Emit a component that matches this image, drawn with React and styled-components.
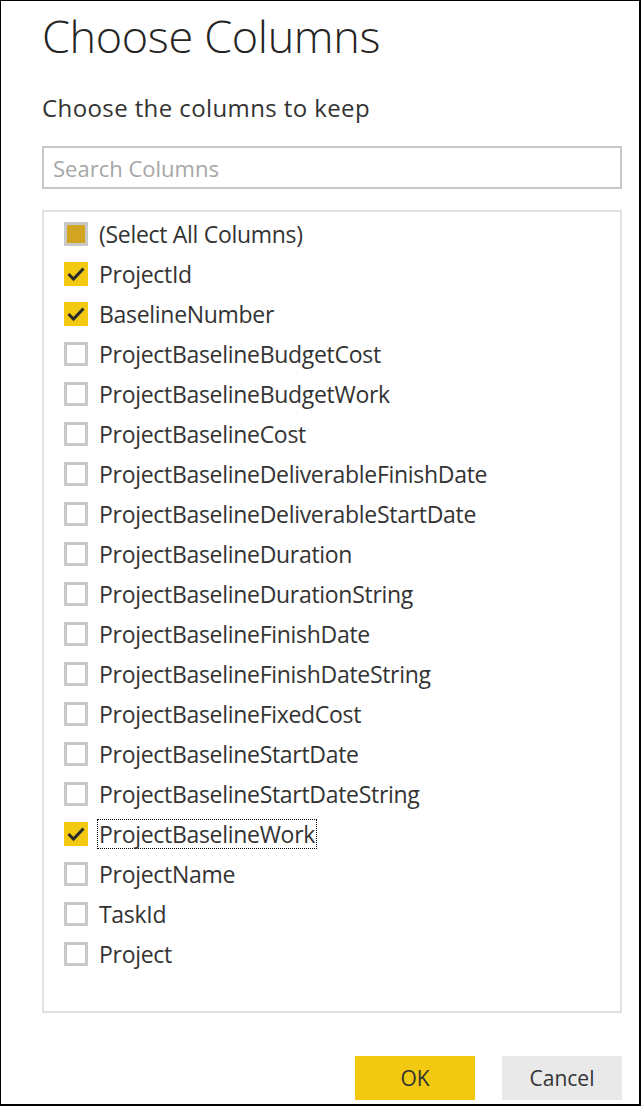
import React, { useState } from 'react'
import styled, { createGlobalStyle } from 'styled-components'

const GlobalStyle = createGlobalStyle`
  html, body {
    margin: 0;
    padding: 0;
    background: #ffffff;
  }
  * {
    box-sizing: border-box;
  }
`

const Dialog = styled.div`
  width: 641px;
  height: 1106px;
  border: 1px solid #000;
  border-right-width: 2px;
  border-bottom-width: 2px;
  padding: 5px 17px 4px 41px;
  display: flex;
  flex-direction: column;
  font-family: 'Open Sans', 'Noto Sans', sans-serif;
  color: #333;
  background: #fff;
`

const Title = styled.h1`
  margin: 0;
  font-size: 45px;
  font-weight: 300;
  line-height: 60px;
  color: #252423;
  letter-spacing: -0.35px;
`

const Subtitle = styled.div`
  margin-top: 26px;
  font-size: 24px;
  line-height: 32px;
  color: #333;
  letter-spacing: 0.4px;
`

const Search = styled.input`
  margin-top: 22px;
  height: 43px;
  width: 580px;
  border: 2px solid #c8c8c8;
  padding: 0 9px;
  font-family: inherit;
  font-size: 22px;
  color: #333;
  outline: none;
  &::placeholder {
    color: #a6a6a6;
  }
`

const List = styled.div`
  margin-top: 21px;
  width: 580px;
  height: 803px;
  border: 2px solid #dde1e6;
  padding: 2px 0 0 20px;
  display: flex;
  flex-direction: column;
`

const Row = styled.label`
  height: 40px;
  display: flex;
  align-items: center;
  gap: 10px;
  cursor: pointer;
`

const Box = styled.span`
  width: 24px;
  height: 24px;
  flex: none;
  display: flex;
  align-items: center;
  justify-content: center;
  background: ${p => (p.$state === 'checked' ? '#f2c811' : '#fff')};
  border: ${p => (p.$state === 'checked' ? 'none' : '3px solid #c8c8c8')};
`

const Partial = styled.span`
  width: 18px;
  height: 18px;
  background: #d1a521;
`

const Label = styled.span`
  font-size: 23px;
  line-height: 28px;
  color: #333;
  padding: 0 1px;
  margin-left: -1px;
  border: 1px dotted ${p => (p.$focused ? '#000' : 'transparent')};
  letter-spacing: -0.3px;
`

const Footer = styled.div`
  margin-top: auto;
  display: flex;
  justify-content: flex-end;
  gap: 27px;
`

const Button = styled.button`
  width: 120px;
  height: 44px;
  border: none;
  background: ${p => (p.$primary ? '#f2c811' : '#e9e9e9')};
  color: #333;
  font-family: inherit;
  font-size: 21px;
  cursor: pointer;
`

const columns = [
  'ProjectId',
  'BaselineNumber',
  'ProjectBaselineBudgetCost',
  'ProjectBaselineBudgetWork',
  'ProjectBaselineCost',
  'ProjectBaselineDeliverableFinishDate',
  'ProjectBaselineDeliverableStartDate',
  'ProjectBaselineDuration',
  'ProjectBaselineDurationString',
  'ProjectBaselineFinishDate',
  'ProjectBaselineFinishDateString',
  'ProjectBaselineFixedCost',
  'ProjectBaselineStartDate',
  'ProjectBaselineStartDateString',
  'ProjectBaselineWork',
  'ProjectName',
  'TaskId',
  'Project',
]

const Check = () => (
  <svg width="24" height="24" viewBox="0 0 24 24">
    <polyline points="4.5,12 9.5,17 19.5,6.5" fill="none" stroke="#2b2b2b" strokeWidth="3" />
  </svg>
)

const CheckBox = ({ state }) => (
  <Box $state={state}>
    {state === 'checked' && <Check />}
    {state === 'partial' && <Partial />}
  </Box>
)

export default function App() {
  const [checked, setChecked] = useState(['ProjectId', 'BaselineNumber', 'ProjectBaselineWork'])
  const toggle = name =>
    setChecked(c => (c.includes(name) ? c.filter(n => n !== name) : [...c, name]))

  return (
    <>
      <GlobalStyle />
      <Dialog>
        <Title>Choose Columns</Title>
        <Subtitle>Choose the columns to keep</Subtitle>
        <Search placeholder="Search Columns" />
        <List>
          <Row>
            <CheckBox state="partial" />
            <Label>(Select All Columns)</Label>
          </Row>
          {columns.map(name => (
            <Row key={name} onClick={() => toggle(name)}>
              <CheckBox state={checked.includes(name) ? 'checked' : 'empty'} />
              <Label $focused={name === 'ProjectBaselineWork'}>{name}</Label>
            </Row>
          ))}
        </List>
        <Footer>
          <Button $primary>OK</Button>
          <Button>Cancel</Button>
        </Footer>
      </Dialog>
    </>
  )
}
